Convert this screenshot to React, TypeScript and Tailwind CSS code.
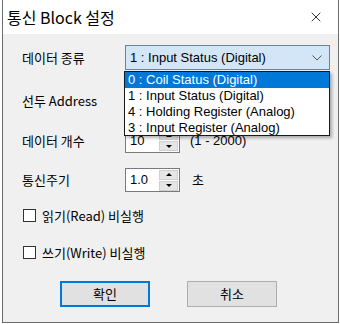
import { X } from 'lucide-react';

const kr = "font-['Noto_Sans_CJK_KR','Noto_Sans',sans-serif]";
const ui = "font-['Liberation_Sans','Noto_Sans_CJK_KR',sans-serif]";

function SpinButtons() {
  return (
    <div className="flex flex-col gap-[1px] py-[1px] pr-[1px]">
      <div className="w-[19px] h-[10px] bg-[#e5e5e5] border border-[#cfcfcf] flex items-center justify-center">
        <div className="w-0 h-0 border-x-[3px] border-x-transparent border-b-[3px] border-b-black" />
      </div>
      <div className="w-[19px] h-[10px] bg-[#e5e5e5] border border-[#cfcfcf] flex items-center justify-center">
        <div className="w-0 h-0 border-x-[3px] border-x-transparent border-t-[3px] border-t-black" />
      </div>
    </div>
  );
}

function SpinBox({ value }: { value: string }) {
  return (
    <div className="w-[55px] h-[24px] bg-white border border-[#7a7a7a] flex items-center justify-between">
      <span className={`${ui} text-[13px] text-black pl-[4px]`}>{value}</span>
      <SpinButtons />
    </div>
  );
}

function CheckRow({ label }: { label: string }) {
  return (
    <div className="h-[16px] flex items-center gap-[6px] pl-[1px]">
      <div className="w-[13px] h-[13px] bg-white border border-[#333333]" />
      <span className={`${kr} text-[13px] text-black leading-none`}>{label}</span>
    </div>
  );
}

export default function App() {
  const items = [
    '0 : Coil Status (Digital)',
    '1 : Input Status (Digital)',
    '4 : Holding Register (Analog)',
    '3 : Input Register (Analog)',
  ];

  return (
    <div className="w-[340px] h-[324px] bg-white">
      <div className="ml-[2px] w-[337px] h-[323px] border-x border-b border-[#6b6b6b] flex flex-col">
        <div className="h-[34px] bg-white flex items-center justify-between pl-[4px] pr-[14px]">
          <span className={`${kr} text-[16px] text-black`}>통신 Block 설정</span>
          <X className="w-[16px] h-[16px] text-black" strokeWidth={1.2} />
        </div>

        <div className="flex-1 bg-[#f0f0f0] relative pl-[19px] flex flex-col">
          <div className="mt-[11px] h-[25px] flex items-center">
            <span className={`${kr} w-[103px] text-[13px] text-black`}>데이터 종류</span>
            <div className="w-[205px] h-[25px] bg-[#d3e6f8] border border-[#3d8ed8] flex items-center justify-between pl-[4px] pr-[6px]">
              <span className={`${ui} text-[13px] text-black`}>1 : Input Status (Digital)</span>
              <svg width="10" height="6" viewBox="0 0 10 6" className="mr-[1px]">
                <path d="M0.5 0.5 L5 5 L9.5 0.5" fill="none" stroke="#555" strokeWidth="1" />
              </svg>
            </div>
          </div>

          <div className="mt-[19px] h-[23px] flex items-center">
            <span className={`${kr} w-[103px] text-[13px] text-black`}>선두 Address</span>
            <div className="w-[80px] h-[23px] bg-white border border-[#7a7a7a]" />
          </div>

          <div className="mt-[17px] h-[23px] flex items-center">
            <span className={`${kr} w-[103px] text-[13px] text-black`}>데이터 개수</span>
            <SpinBox value="10" />
            <span className={`${ui} ml-[10px] text-[13px] text-black`}>(1 - 2000)</span>
          </div>

          <div className="mt-[16px] h-[24px] flex items-center">
            <span className={`${kr} w-[103px] text-[13px] text-black`}>통신주기</span>
            <SpinBox value="1.0" />
            <span className={`${kr} ml-[12px] text-[13px] text-black`}>초</span>
          </div>

          <div className="mt-[15px]">
            <CheckRow label="읽기(Read) 비실행" />
          </div>
          <div className="mt-[21px]">
            <CheckRow label="쓰기(Write) 비실행" />
          </div>

          <div className="mt-[21px] flex gap-[37px] pl-[38px]">
            <button className={`${kr} w-[90px] h-[26px] bg-[#e1e1e1] border-2 border-[#0078d7] text-[13px] text-black`}>
              확인
            </button>
            <button className={`${kr} w-[90px] h-[26px] bg-[#e1e1e1] border border-[#adadad] text-[13px] text-black`}>
              취소
            </button>
          </div>

          <div className="absolute left-[121px] top-[37px] w-[206px] h-[65px] bg-white border border-[#1a1a1a] shadow-[2px_2px_3px_rgba(0,0,0,0.3)] flex flex-col">
            {items.map((it, i) => (
              <div
                key={it}
                className={`${ui} h-[16px] flex items-center pl-[3px] text-[13px] ${i === 0 ? 'bg-[#0078d7] text-white' : 'text-black'}`}
              >
                {it}
              </div>
            ))}
          </div>
        </div>
      </div>
    </div>
  );
}
